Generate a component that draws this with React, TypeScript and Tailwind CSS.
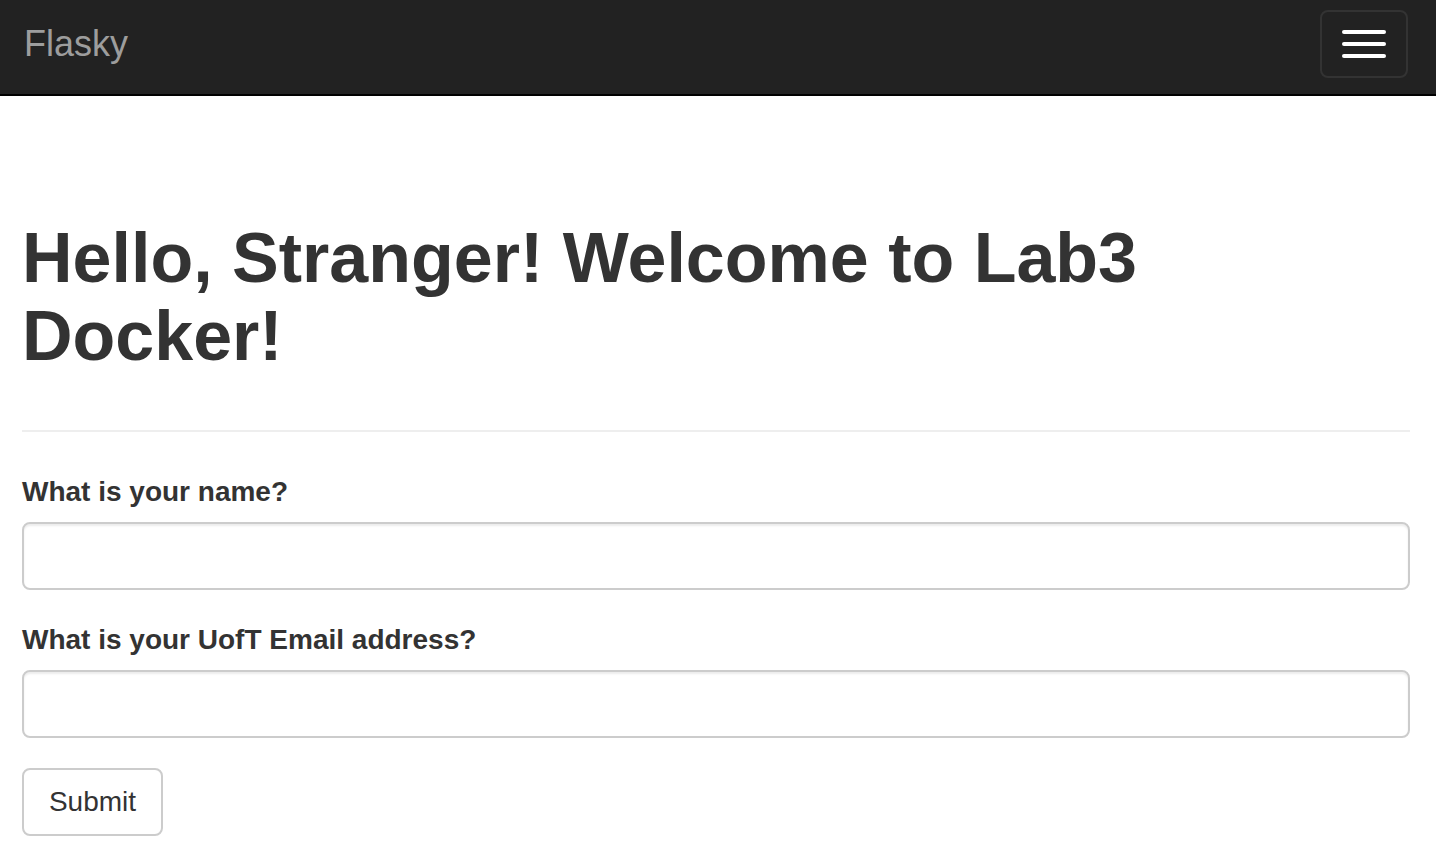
import React from "react";

const font = { fontFamily: '"Liberation Sans", Arial, Helvetica, sans-serif' };

function Navbar() {
  return (
    <nav className="flex h-[96px] items-center justify-between border-b-2 border-black bg-[#222222] pb-[6px] pl-[24px] pr-[28px]">
      <a className="text-[36px] leading-none text-[#9d9d9d]" href="#">
        Flasky
      </a>
      <button className="flex h-[68px] w-[88px] flex-col items-center justify-center gap-[8px] rounded-[8px] border-2 border-[#333333]">
        <span className="block h-[4px] w-[44px] rounded-[2px] bg-white"></span>
        <span className="block h-[4px] w-[44px] rounded-[2px] bg-white"></span>
        <span className="block h-[4px] w-[44px] rounded-[2px] bg-white"></span>
      </button>
    </nav>
  );
}

function Field({ label }: { label: string }) {
  return (
    <div className="flex flex-col">
      <label className="text-[28px] font-bold leading-[40px] text-[#333333]">
        {label}
      </label>
      <input
        className="mt-[10px] h-[68px] w-full rounded-[8px] border-2 border-[#cccccc] px-[24px] text-[28px] shadow-[inset_0_2px_2px_rgba(0,0,0,0.075)] outline-none"
        type="text"
      />
    </div>
  );
}

export default function App() {
  return (
    <div className="min-h-screen bg-white text-[#333333]" style={font}>
      <Navbar />
      <main className="pl-[22px] pr-[26px] pt-[123px]">
        <div className="border-b-2 border-[#eeeeee] pb-[55px]">
          <h1 className="text-[70px] font-bold leading-[78px] text-[#333333]">
            Hello, Stranger! Welcome to Lab3 Docker!
          </h1>
        </div>
        <form className="mt-[40px] flex flex-col gap-[30px]">
          <Field label="What is your name?" />
          <Field label="What is your UofT Email address?" />
          <div>
            <button
              type="button"
              className="h-[68px] w-[141px] rounded-[8px] border-2 border-[#cccccc] bg-white text-[28px] text-[#333333]"
            >
              Submit
            </button>
          </div>
        </form>
      </main>
    </div>
  );
}
